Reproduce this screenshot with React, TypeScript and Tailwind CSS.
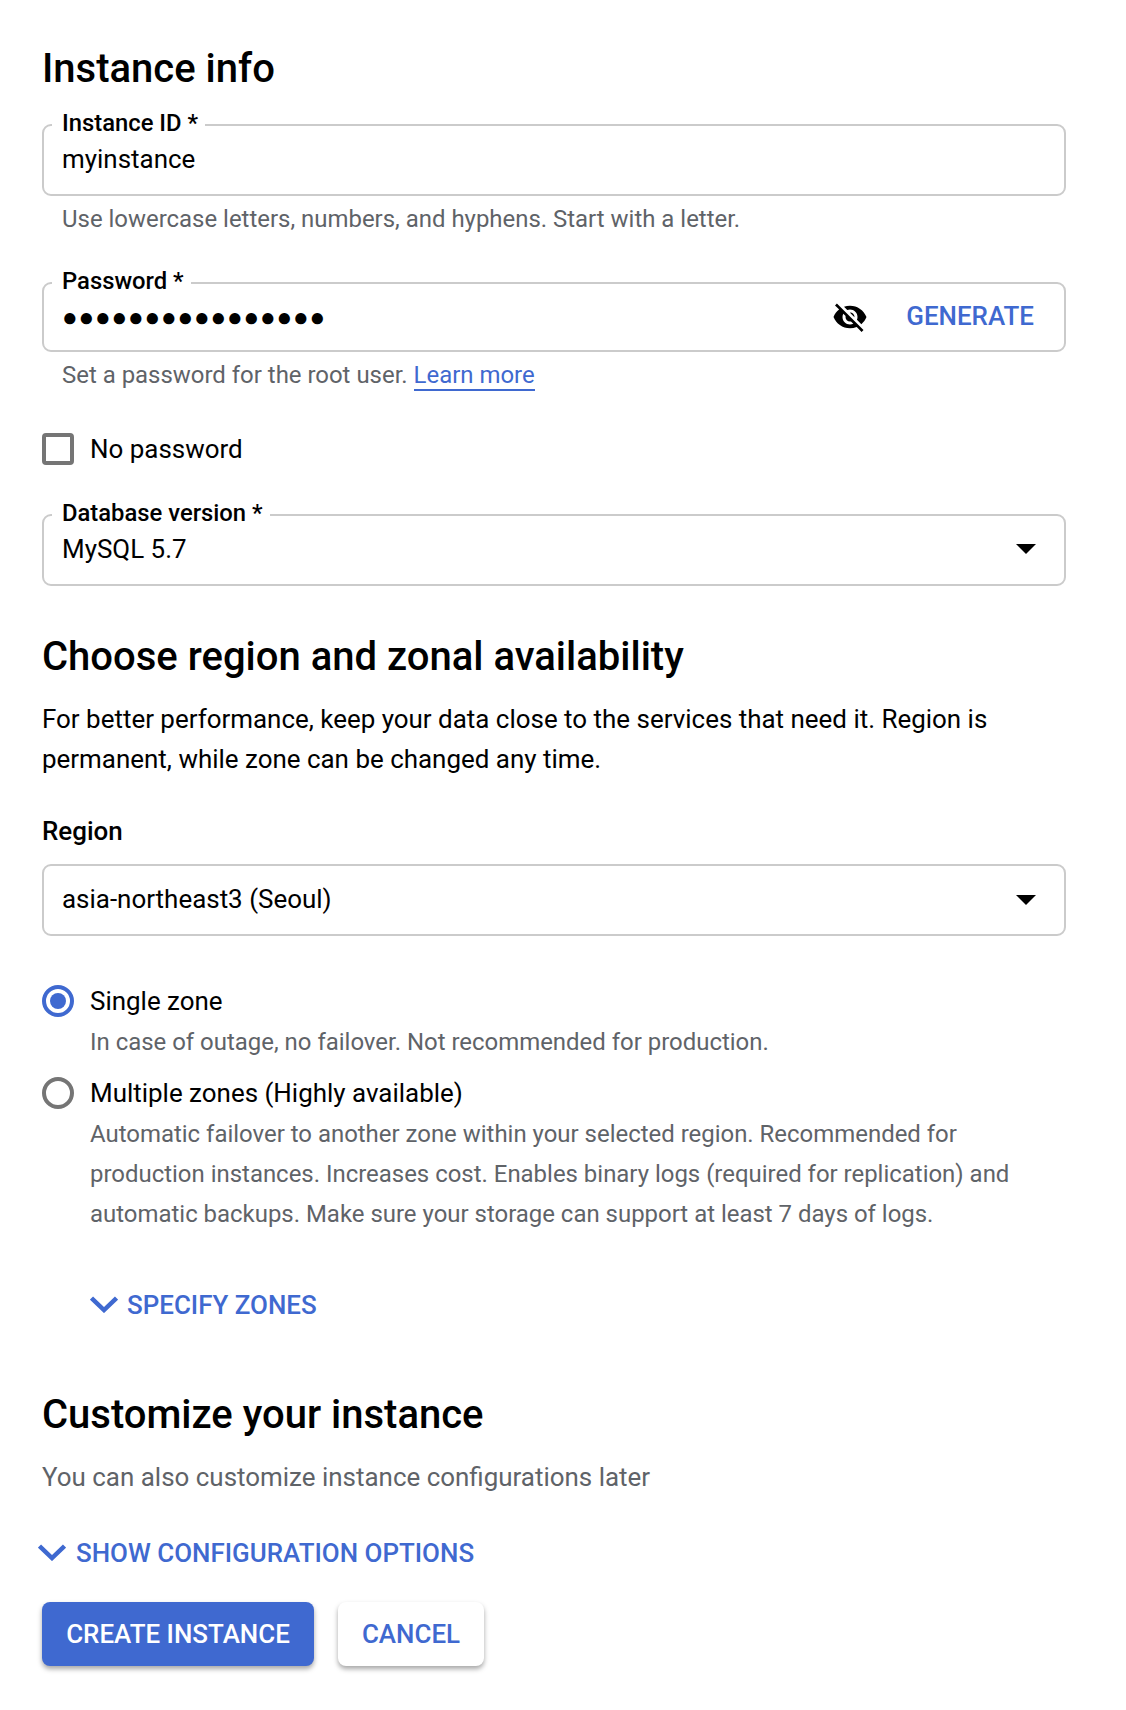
const Chevron = ({ className }: { className: string }) => (
  <svg viewBox="0 0 28 17" className={className} fill="none" stroke="currentColor" strokeWidth="4.5">
    <path d="M1.5 2 14 14 26.5 2" />
  </svg>
);

const Caret = () => (
  <svg viewBox="0 0 20 10" className="w-5 h-[10px] text-black" fill="currentColor">
    <path d="M0 0h20L10 10z" />
  </svg>
);

const EyeOff = () => (
  <svg viewBox="0 0 24 24" className="w-9 h-9 text-black" fill="currentColor">
    <path d="M12 7c2.76 0 5 2.24 5 5 0 .65-.13 1.26-.36 1.83l2.92 2.92c1.51-1.26 2.7-2.89 3.43-4.75-1.73-4.39-6-7.5-11-7.5-1.4 0-2.74.25-3.98.7l2.16 2.16C10.74 7.13 11.35 7 12 7zM2 4.27l2.28 2.28.46.46C3.08 8.3 1.78 10.02 1 12c1.73 4.39 6 7.5 11 7.5 1.55 0 3.03-.3 4.38-.84l.42.42L19.73 22 21 20.73 3.27 3 2 4.27zM7.53 9.8l1.55 1.55c-.05.21-.08.43-.08.65 0 1.66 1.34 3 3 3 .22 0 .44-.03.65-.08l1.55 1.55c-.67.33-1.41.53-2.2.53-2.76 0-5-2.24-5-5 0-.79.2-1.53.53-2.2zm4.31-.78l3.15 3.15.02-.16c0-1.66-1.34-3-3-3l-.17.01z" />
  </svg>
);

const Field = ({ label, h, children }: { label: string; h: string; children: React.ReactNode }) => (
  <fieldset className={`border-2 border-[#cbcbcb] rounded-[9px] px-[18px] min-w-0 ${h}`}>
    <legend className="-ml-[10px] pl-[10px] pr-[7px] text-[23.8px] leading-[26px] font-medium text-black whitespace-nowrap">
      <span className="block -translate-y-[2px]">{label}</span>
    </legend>
    <div className="flex items-center justify-between h-[42px] text-[25.95px] text-black">{children}</div>
  </fieldset>
);

export default function App() {
  return (
    <div className="w-[1126px] h-[1710px] bg-white pl-[42px] pr-[60px] pt-[45px] font-['Roboto',sans-serif] text-black overflow-hidden">
      <h1 className="text-[40px] leading-[48px] font-medium">Instance info</h1>

      <div className="mt-[19px]">
        <Field label="Instance ID *" h="h-[84px]">
          <span>myinstance</span>
        </Field>
        <p className="mt-[8px] pl-[20px] text-[23.94px] leading-[30px] text-[#5f6368]">
          Use lowercase letters, numbers, and hyphens. Start with a letter.
        </p>
      </div>

      <div className="mt-[36px]">
        <Field label="Password *" h="h-[82px]">
          <span className="font-['Liberation_Sans',sans-serif] text-[26px] leading-[42px] tracking-[0.8px]">●●●●●●●●●●●●●●●●</span>
          <div className="flex items-center gap-[38px] pr-[12px]">
            <EyeOff />
            <span className="pb-[2px] text-[25.95px] font-medium text-[#3f69d0]">GENERATE</span>
          </div>
        </Field>
        <p className="mt-[8px] pl-[20px] text-[23.94px] leading-[30px] text-[#5f6368]">
          Set a password for the root user.{' '}
          <a className="text-[#3f69d0] border-b-2 border-[#3f69d0]">Learn more</a>
        </p>
      </div>

      <label className="flex items-center gap-[16px] mt-[43px]">
        <span className="w-[32px] h-[32px] border-[4px] border-[#757575] rounded-[4px]" />
        <span className="text-[25.95px] leading-[32px]">No password</span>
      </label>

      <div className="mt-[37px]">
        <Field label="Database version *" h="h-[84px]">
          <span>MySQL 5.7</span>
          <div className="pr-[10px]"><Caret /></div>
        </Field>
      </div>

      <h2 className="mt-[47px] text-[40px] leading-[48px] font-medium">Choose region and zonal availability</h2>
      <p className="mt-[18px] text-[25.95px] leading-[40px]">
        For better performance, keep your data close to the services that need it. Region is
        <br />
        permanent, while zone can be changed any time.
      </p>

      <p className="mt-[36px] text-[25.95px] leading-[32px] font-medium">Region</p>
      <div className="mt-[17px] flex items-center justify-between h-[72px] border-2 border-[#cbcbcb] rounded-[9px] pl-[18px] pr-[28px] text-[25.95px]">
        <span className="pb-[2px]">asia-northeast3 (Seoul)</span>
        <Caret />
      </div>

      <div className="mt-[49px] flex gap-[16px]">
        <span className="w-[32px] h-[32px] shrink-0 rounded-full border-[4px] border-[#3f69d0] flex items-center justify-center">
          <span className="w-[16px] h-[16px] rounded-full bg-[#3f69d0]" />
        </span>
        <div>
          <p className="text-[25.95px] leading-[32px]">Single zone</p>
          <p className="mt-[5px] text-[23.94px] leading-[40px] text-[#5f6368]">
            In case of outage, no failover. Not recommended for production.
          </p>
        </div>
      </div>

      <div className="mt-[15px] flex gap-[16px]">
        <span className="w-[32px] h-[32px] shrink-0 rounded-full border-[4px] border-[#757575]" />
        <div>
          <p className="text-[25.95px] leading-[32px]">Multiple zones (Highly available)</p>
          <p className="mt-[5px] text-[23.94px] leading-[40px] text-[#5f6368]">
            Automatic failover to another zone within your selected region. Recommended for
            <br />
            production instances. Increases cost. Enables binary logs (required for replication) and
            <br />
            automatic backups. Make sure your storage can support at least 7 days of logs.
          </p>
        </div>
      </div>

      <div className="mt-[55px] ml-[48px] flex items-center gap-[9px] text-[25.95px] leading-[32px] font-medium text-[#3f69d0]">
        <Chevron className="w-[28px] h-[17px] -mt-[2px]" />
        <span>SPECIFY ZONES</span>
      </div>

      <h2 className="mt-[70px] text-[40px] leading-[48px] font-medium">Customize your instance</h2>
      <p className="mt-[22px] text-[25.95px] leading-[32px] text-[#5f6368]">You can also customize instance configurations later</p>

      <div className="mt-[44px] -ml-[4px] flex items-center gap-[10px] text-[25.95px] leading-[32px] font-medium text-[#3f69d0]">
        <Chevron className="w-[28px] h-[17px] -mt-[2px]" />
        <span>SHOW CONFIGURATION OPTIONS</span>
      </div>

      <div className="mt-[33px] flex gap-[24px]">
        <button className="h-[64px] w-[272px] rounded-[8px] bg-[#3f69d0] text-white text-[25.95px] font-medium shadow-[0_3px_5px_rgba(0,0,0,0.35)]">
          CREATE INSTANCE
        </button>
        <button className="h-[64px] w-[146px] rounded-[8px] bg-white text-[#3f69d0] text-[25.95px] font-medium shadow-[0_3px_5px_rgba(0,0,0,0.35)]">
          CANCEL
        </button>
      </div>
    </div>
  );
}
